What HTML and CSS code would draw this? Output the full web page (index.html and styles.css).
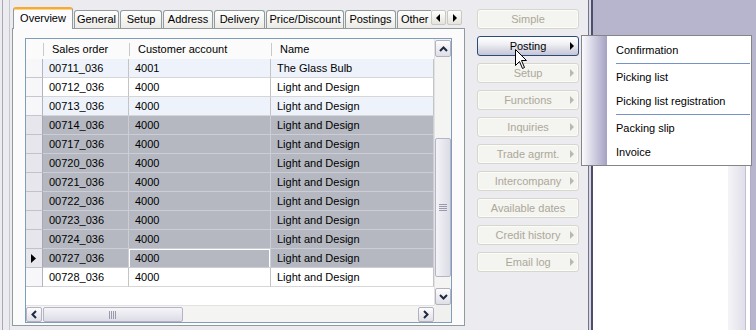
FILE: index.html
```html
<!DOCTYPE html>
<html lang="en">
<head>
  <meta charset="UTF-8" />
  <title>Sales orders</title>
  <link rel="stylesheet" href="styles.css">
</head>
<body>
<div class="screen">
  <div class="edge"></div>

  <div class="form">
    <div class="tabbar">
      <div class="tabs">
        <span class="tab active">Overview</span>
        <span class="tab">General</span>
        <span class="tab">Setup</span>
        <span class="tab">Address</span>
        <span class="tab">Delivery</span>
        <span class="tab">Price/Discount</span>
        <span class="tab">Postings</span>
        <span class="tab last">Other</span>
      </div>
      <div class="tabnav">
        <span class="navbtn"><svg width="5" height="8" viewBox="0 0 5 8"><path d="M4 0L0 4L4 8Z" fill="#000"/></svg></span>
        <span class="navbtn"><svg width="5" height="8" viewBox="0 0 5 8"><path d="M1 0L5 4L1 8Z" fill="#000"/></svg></span>
      </div>
    </div>

    <div class="panel">
      <div class="grid">
        <div class="table">
          <div class="row head">
            <div class="cell sel"></div>
            <div class="cell">Sales order</div>
            <div class="cell">Customer account</div>
            <div class="cell">Name</div>
          </div>
          <div class="row alt"><div class="cell sel"></div><div class="cell">00711_036</div><div class="cell">4001</div><div class="cell">The Glass Bulb</div></div>
          <div class="row"><div class="cell sel"></div><div class="cell">00712_036</div><div class="cell">4000</div><div class="cell">Light and Design</div></div>
          <div class="row alt"><div class="cell sel"></div><div class="cell">00713_036</div><div class="cell">4000</div><div class="cell">Light and Design</div></div>
          <div class="row picked"><div class="cell sel"></div><div class="cell">00714_036</div><div class="cell">4000</div><div class="cell">Light and Design</div></div>
          <div class="row picked"><div class="cell sel"></div><div class="cell">00717_036</div><div class="cell">4000</div><div class="cell">Light and Design</div></div>
          <div class="row picked"><div class="cell sel"></div><div class="cell">00720_036</div><div class="cell">4000</div><div class="cell">Light and Design</div></div>
          <div class="row picked"><div class="cell sel"></div><div class="cell">00721_036</div><div class="cell">4000</div><div class="cell">Light and Design</div></div>
          <div class="row picked"><div class="cell sel"></div><div class="cell">00722_036</div><div class="cell">4000</div><div class="cell">Light and Design</div></div>
          <div class="row picked"><div class="cell sel"></div><div class="cell">00723_036</div><div class="cell">4000</div><div class="cell">Light and Design</div></div>
          <div class="row picked"><div class="cell sel"></div><div class="cell">00724_036</div><div class="cell">4000</div><div class="cell">Light and Design</div></div>
          <div class="row picked"><div class="cell sel current"><svg width="5" height="9" viewBox="0 0 5 9"><path d="M0 0L5 4.5L0 9Z" fill="#000"/></svg></div><div class="cell">00727_036</div><div class="cell focus">4000</div><div class="cell">Light and Design</div></div>
          <div class="row"><div class="cell sel"></div><div class="cell">00728_036</div><div class="cell">4000</div><div class="cell">Light and Design</div></div>
        </div>

        <div class="vscroll">
          <span class="sbtn"><svg width="9" height="6" viewBox="0 0 9 6"><path d="M1 5L4.5 1.5L8 5" fill="none" stroke="#1d2a44" stroke-width="2"/></svg></span>
          <div class="vtrack"><div class="vthumb"><span class="grip"></span></div></div>
          <span class="sbtn"><svg width="9" height="6" viewBox="0 0 9 6"><path d="M1 1L4.5 4.5L8 1" fill="none" stroke="#1d2a44" stroke-width="2"/></svg></span>
        </div>

        <div class="hscroll">
          <span class="sbtn"><svg width="6" height="9" viewBox="0 0 6 9"><path d="M5 1L1.5 4.5L5 8" fill="none" stroke="#1d2a44" stroke-width="2"/></svg></span>
          <div class="hthumb"><span class="grip"></span></div>
          <div class="htrack"></div>
          <span class="sbtn"><svg width="6" height="9" viewBox="0 0 6 9"><path d="M1 1L4.5 4.5L1 8" fill="none" stroke="#1d2a44" stroke-width="2"/></svg></span>
        </div>
        <div class="corner"></div>
      </div>
    </div>
  </div>

  <div class="actions">
    <span class="btn">Simple</span>
    <span class="btn on more">Posting</span>
    <span class="btn more">Setup</span>
    <span class="btn more">Functions</span>
    <span class="btn more">Inquiries</span>
    <span class="btn more">Trade agrmt.</span>
    <span class="btn more">Intercompany</span>
    <span class="btn">Available dates</span>
    <span class="btn more">Credit history</span>
    <span class="btn more">Email log</span>
  </div>

  <div class="divider"></div>

  <div class="backwin">
    <div class="backtop"></div>
    <div class="backbody"></div>
  </div>

  <div class="popup">
    <div class="item">Confirmation</div>
    <div class="sep"></div>
    <div class="item">Picking list</div>
    <div class="item">Picking list registration</div>
    <div class="sep"></div>
    <div class="item">Packing slip</div>
    <div class="item">Invoice</div>
  </div>

  <svg class="cursor" width="13" height="21" viewBox="0 0 13 21">
    <path d="M0.5 0.5L0.5 16.5L4.5 12.5L7.5 19.5L9.5 18.5L6.5 11.5L11.5 11.5Z" fill="#fff" stroke="#000" stroke-width="1"/>
  </svg>
</div>
</body>
</html>
```

FILE: styles.css
```css
*{box-sizing:border-box}
body{
  margin:0;
  font:11px "Liberation Sans",Arial,sans-serif;
  color:#000;
  background:#ecebef
}
.screen{
  position:relative;
  display:flex;
  width:756px;
  height:330px;
  overflow:hidden
}
.edge{
  width:12px;
  flex:none;
  background:linear-gradient(to right,transparent 2px,#a8a8b4 2px 3px,transparent 3px 9px,#c6c6ce 9px 10px,transparent 10px)
}

/* tab control */
.form{
  width:458px;
  flex:none;
  padding-top:7px
}
.tabbar{
  display:flex;
  height:21px;
  padding-left:1px;
  position:relative;
  z-index:1
}
.tabs{
  display:grid;
  grid-template-columns:60px 45px 42px 50px 51px 78px 51px 34px;
  column-gap:1px;
  align-items:end;
  width:418px;
  height:22px;
  overflow:hidden
}
.tab{
  height:18px;
  margin-bottom:1px;
  border:1px solid #919b9c;
  border-bottom:none;
  border-radius:3px 3px 0 0;
  background:linear-gradient(#fefefe,#ecebe6);
  text-align:center;
  line-height:17px;
  white-space:nowrap;
  overflow:hidden
}
.tab.last{
  text-align:left;
  padding-left:3px;
  border-right:none;
  border-radius:3px 0 0 0
}
.tab.active{
  height:22px;
  margin-bottom:0;
  border-top:2px solid #f4a93a;
  box-shadow:inset 0 1px #ffd47e;
  background:#fcfcfe;
  line-height:19px
}
.tabnav{
  display:flex;
  gap:1px;
  margin-top:3px;
  height:15px
}
.navbtn{
  display:flex;
  align-items:center;
  justify-content:center;
  width:15px;
  height:15px;
  border:1px solid #c9c9c2;
  border-radius:2px;
  background:linear-gradient(#fff,#e4e3dc)
}
.panel{
  width:453px;
  height:298px;
  border:1px solid #919b9c;
  background:#fbfbfb;
  padding:9px 0 0 12px
}

/* grid */
.grid{
  display:grid;
  grid-template-columns:408px 17px;
  grid-template-rows:266px 17px;
  width:427px;
  height:285px;
  border:1px solid #7f9db9;
  background:#fff
}
.table{display:flex;flex-direction:column}
.row{
  display:grid;
  grid-template-columns:17px 86px 142px 163px;
  height:19px
}
.cell{
  border-right:1px solid #c4c4c4;
  border-bottom:1px solid #d6d6d6;
  padding-left:6px;
  line-height:18px;
  white-space:nowrap;
  overflow:hidden
}
.head{height:20px;background:#fbfbfb}
.head .cell{
  border:none;
  padding-left:9px;
  line-height:20px;
  background:linear-gradient(#c9c9c9,#c9c9c9) no-repeat 0 4px/1px 13px
}
.head .cell.sel{background:none}
.alt{background:#eef3fb}
.picked{background:#b5b8c1}
.picked .cell{border-color:#cbced4}
.sel{
  padding:0;
  background:#f7f7f9;
  border-right-color:#b4b4c0;
  border-bottom-color:#c6c6d0
}
.picked .sel{background:#e6e6ec;border-color:#c2c2cc #a8a8b6 #c2c2cc}
.current{display:flex;align-items:center;padding-left:5px}
.focus{box-shadow:inset 1px 1px #fff,inset -1px 0 #fff}

/* scrollbars */
.sbtn{
  display:flex;
  align-items:center;
  justify-content:center;
  flex:none;
  width:16px;
  height:17px;
  border:1px solid #b2b2c2;
  border-radius:2px;
  background:linear-gradient(#fdfdfd,#dedee6)
}
.vscroll{
  display:flex;
  flex-direction:column;
  padding-top:1px;
  background:#f4f4f2;
  border-left:1px solid #e2e2e2
}
.vtrack{flex:1;padding-top:81px}
.vthumb,.hthumb{
  display:flex;
  align-items:center;
  justify-content:center;
  border:1px solid #b4b4c6;
  border-radius:2px;
  background:linear-gradient(to right,#f3f3f8,#dcdce6)
}
.vthumb{height:139px;width:16px}
.vthumb .grip{
  width:8px;
  height:8px;
  background:repeating-linear-gradient(#9a9aac 0 1px,transparent 1px 2px)
}
.hscroll{
  display:flex;
  padding-top:1px;
  background:#f4f4f2;
  border-top:1px solid #e2e2e2
}
.hscroll .sbtn{width:16px;height:15px}
.hthumb{
  width:140px;
  height:15px;
  margin-left:1px;
  background:linear-gradient(#f5f5f9,#dcdce6)
}
.hthumb .grip{
  width:8px;
  height:8px;
  background:repeating-linear-gradient(to right,#9a9aac 0 1px,transparent 1px 2px)
}
.htrack{flex:1}
.corner{background:#f0f0ee}

/* action buttons */
.actions{
  width:118px;
  flex:none;
  display:flex;
  flex-direction:column;
  gap:7px;
  padding:9px 0 0 7px
}
.btn{
  position:relative;
  width:102px;
  height:20px;
  border:1px solid #d6d6cd;
  border-radius:3px;
  background:#f4f4f0;
  box-shadow:inset 0 0 0 1px #fbfbf8;
  color:#aca899;
  text-align:center;
  line-height:18px
}
.btn.more::after{
  content:"";
  position:absolute;
  right:4px;
  top:5px;
  border-left:4px solid #b9b8ae;
  border-top:4px solid transparent;
  border-bottom:4px solid transparent
}
.btn.on{
  color:#000;
  border-color:#2c4a7a;
  box-shadow:none;
  background:linear-gradient(#ffffff 0%,#f2f2f6 35%,#c4c4d6 100%)
}
.btn.on::after{border-left-color:#000}

/* window behind the menu */
.divider{
  width:5px;
  flex:none;
  background:linear-gradient(to right,#72728c 0 1px,#d8d8e2 1px 3px,#4e4e6a 3px 5px)
}
.backwin{flex:1;display:flex;flex-direction:column}
.backtop{height:36px;background:#b7b4cd}
.backbody{
  flex:1;
  background:linear-gradient(to right,#fff 0 135px,#f4f4f8 135px,#e0dfea 152px,#c2c0d4 152px 153px,#fff 153px 157px,#aeacc4 157px 158px,#b7b4cd 158px)
}

/* popup menu */
.popup{
  position:absolute;
  left:581px;
  top:35px;
  width:171px;
  height:131px;
  padding:2px 1px 1px 0;
  border:1px solid #858585;
  background:linear-gradient(to right,#fbfbfe 0,#a4a1c3 25px,#fff 25px)
}
.item{
  height:24px;
  line-height:24px;
  padding-left:34px;
  white-space:nowrap
}
.sep{
  height:3px;
  margin-left:34px;
  background:linear-gradient(transparent 1px,#7593c8 1px 2px,transparent 2px)
}
.cursor{position:absolute;left:515px;top:49px}
```
